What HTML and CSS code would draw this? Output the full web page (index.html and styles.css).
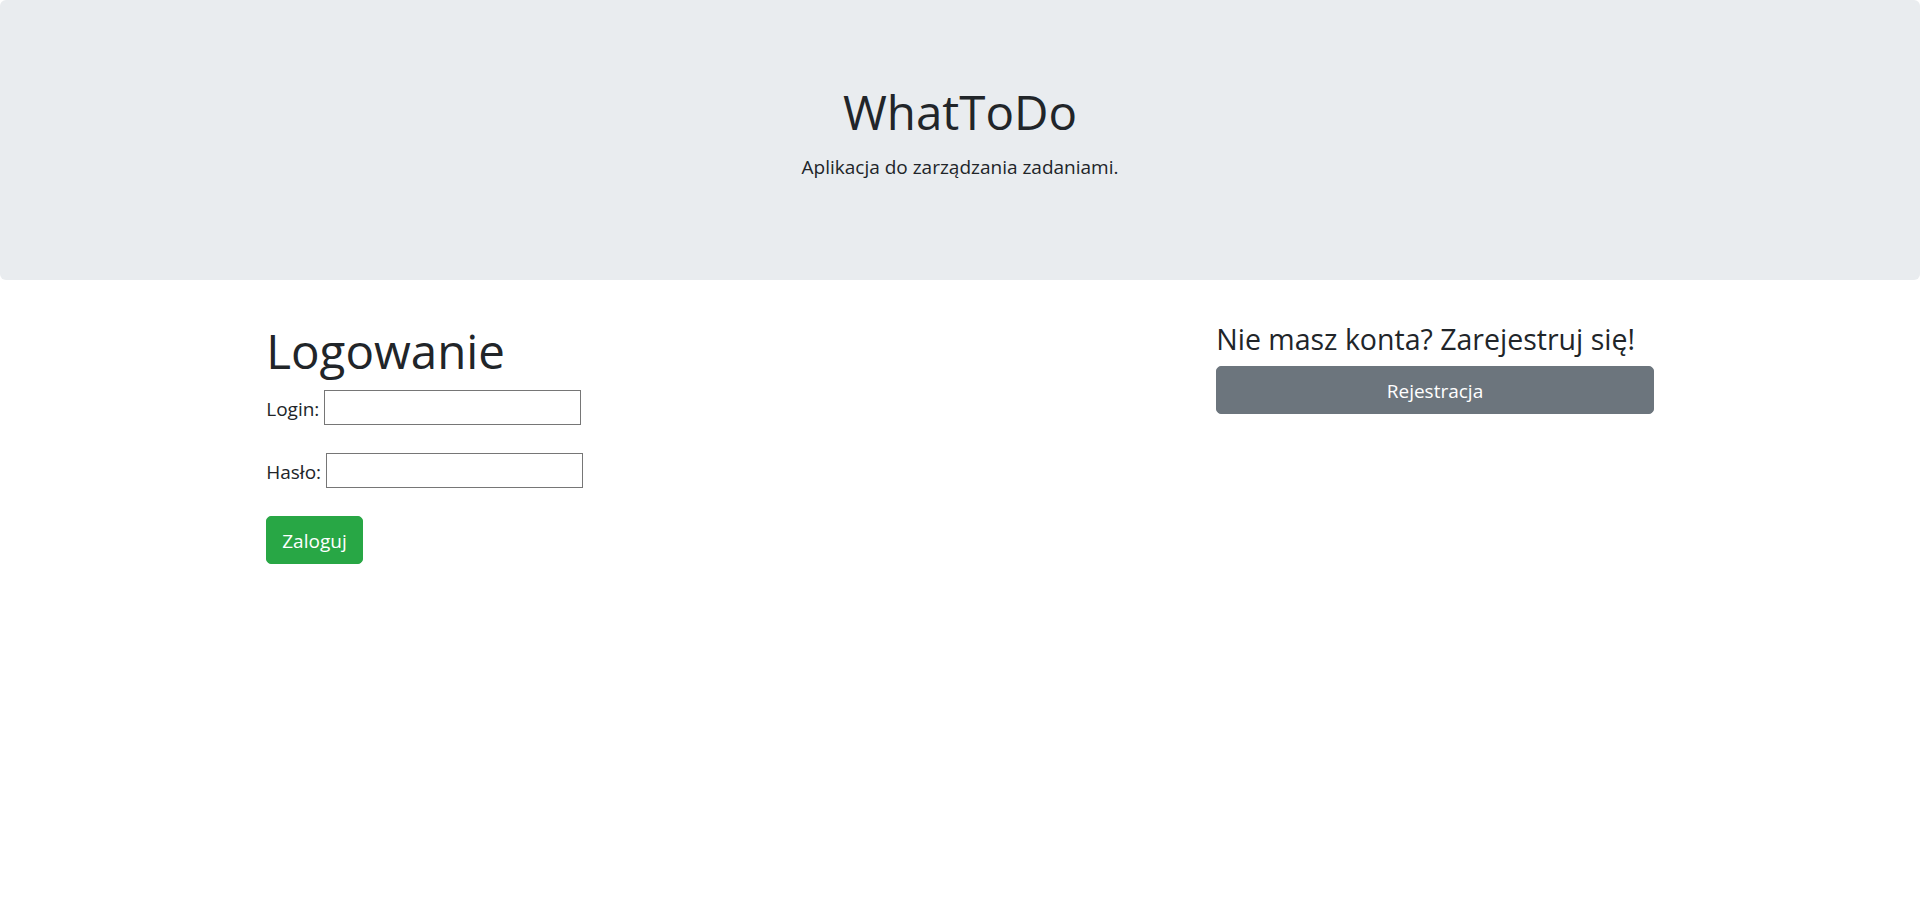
FILE: index.html
```html
<!DOCTYPE html>
<html lang="pl">
<head>
<meta charset="utf-8">
<title>WhatToDo</title>
<link rel="stylesheet" href="styles.css">
</head>
<body>
<header class="jumbotron">
  <h1 class="title">WhatToDo</h1>
  <p class="lead-text">Aplikacja do zarządzania zadaniami.</p>
</header>
<main class="container">
  <div class="row">
    <section class="col-left">
      <h1 class="heading">Logowanie</h1>
      <form class="login-form">
        <div class="field"><label for="login">Login:</label><input id="login" type="text"></div>
        <div class="field"><label for="haslo">Hasło:</label><input id="haslo" type="password"></div>
        <button type="button" class="btn btn-success">Zaloguj</button>
      </form>
    </section>
    <section class="col-right">
      <h4 class="subheading">Nie masz konta? Zarejestruj się!</h4>
      <button type="button" class="btn btn-secondary btn-block">Rejestracja</button>
    </section>
  </div>
</main>
</body>
</html>
```

FILE: styles.css
```css
html {
  font-size: 20px;
}
* {
  box-sizing: border-box;
}
body {
  margin: 0;
  font-family: "Open Sans", "Noto Sans", sans-serif;
  font-size: 19px;
  line-height: 30px;
  color: #212529;
  background: #fff;
}
.jumbotron {
  background: #e9ecef;
  border-radius: 6px;
  padding: 82px 40px 78px;
  margin-bottom: 40px;
  text-align: center;
}
.title {
  margin: 0 0 10px;
  font-size: 47.5px;
  font-weight: 400;
  line-height: 60px;
}
.lead-text {
  margin: 0 0 20px;
}
.container {
  max-width: 1425px;
  margin: 0 auto;
  padding: 0 18.75px;
}
.row {
  display: flex;
  margin: 0 -18.75px;
}
.col-left {
  flex: 0 0 66.6667%;
  padding: 0 18.75px;
}
.col-right {
  flex: 0 0 33.3333%;
  padding: 0 18.75px;
}
.heading {
  margin: 0 0 10px;
  padding-top: 2px;
  font-size: 47.5px;
  font-weight: 400;
  line-height: 58px;
}
.subheading {
  margin: 0 0 10px;
  padding-top: 2px;
  font-size: 28.5px;
  font-weight: 400;
  line-height: 34px;
}
.login-form {
  display: flex;
  flex-direction: column;
  align-items: flex-start;
  gap: 28px;
}
.field {
  display: flex;
  align-items: center;
  gap: 5px;
}
.field label {
  padding-top: 3px;
}
.field input {
  width: 257px;
  height: 35px;
  border: 1px solid #767676;
  border-radius: 0;
  padding: 2px 3px;
  font: inherit;
  background: #fff;
}
.btn {
  display: inline-block;
  font-family: inherit;
  font-size: 19px;
  line-height: 30px;
  padding: 9px 15px 7px;
  border: 1px solid transparent;
  border-radius: 5px;
  color: #fff;
  cursor: pointer;
  text-align: center;
}
.btn-success {
  background: #28a745;
  border-color: #28a745;
}
.btn-secondary {
  background: #6c757d;
  border-color: #6c757d;
}
.btn-block {
  display: block;
  width: 100%;
}
```
